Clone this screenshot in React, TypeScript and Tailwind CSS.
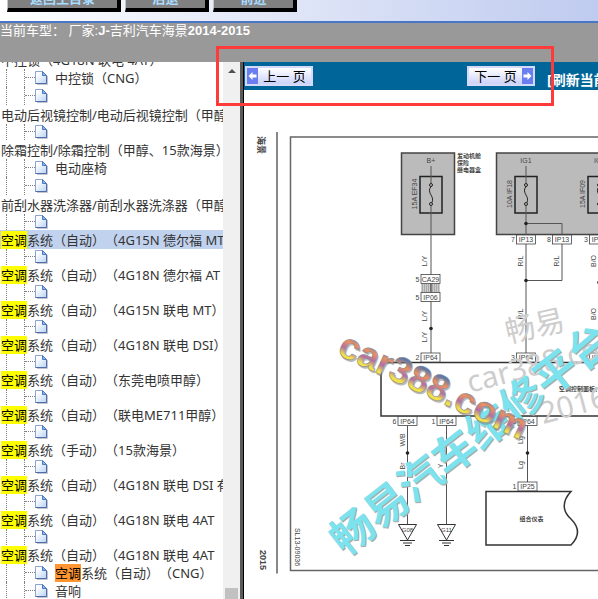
import type { ReactNode } from 'react'
import clsx from 'clsx'

type Row =
  | { kind: 'label'; text: string; hit?: boolean; selected?: boolean }
  | { kind: 'icon' }
  | { kind: 'leaf'; text?: string; hit?: boolean }

const rows: Row[] = [
  { kind: 'label', text: '中控锁（4G18N 联电 4AT）' },
  { kind: 'leaf', text: '中控锁（CNG）' },
  { kind: 'leaf' },
  { kind: 'label', text: '电动后视镜控制/电动后视镜控制（甲醇' },
  { kind: 'icon' },
  { kind: 'label', text: '除霜控制/除霜控制（甲醇、15款海景）' },
  { kind: 'leaf', text: '电动座椅' },
  { kind: 'leaf' },
  { kind: 'label', text: '前刮水器洗涤器/前刮水器洗涤器（甲醇' },
  { kind: 'icon' },
  { kind: 'label', text: '系统（自动）（4G15N 德尔福 MT', hit: true, selected: true },
  { kind: 'icon' },
  { kind: 'label', text: '系统（自动）（4G18N 德尔福 AT', hit: true },
  { kind: 'icon' },
  { kind: 'label', text: '系统（自动）（4G15N 联电 MT）', hit: true },
  { kind: 'icon' },
  { kind: 'label', text: '系统（自动）（4G18N 联电 DSI）', hit: true },
  { kind: 'icon' },
  { kind: 'label', text: '系统（自动）（东莞电喷甲醇）', hit: true },
  { kind: 'icon' },
  { kind: 'label', text: '系统（自动）（联电ME711甲醇）', hit: true },
  { kind: 'icon' },
  { kind: 'label', text: '系统（手动）（15款海景）', hit: true },
  { kind: 'icon' },
  { kind: 'label', text: '系统（自动）（4G18N 联电 DSI 有', hit: true },
  { kind: 'icon' },
  { kind: 'label', text: '系统（自动）（4G18N 联电 4AT', hit: true },
  { kind: 'icon' },
  { kind: 'label', text: '系统（自动）（4G18N 联电 4AT', hit: true },
  { kind: 'leaf', text: '系统（自动）（CNG）', hit: true },
  { kind: 'leaf', text: '音响' },
]

function DocIcon() {
  return (
    <svg width="13" height="14" viewBox="0 0 13 14" className="shrink-0">
      <defs>
        <linearGradient id="page" x1="0" y1="0" x2="1" y2="1">
          <stop offset="0.2" stopColor="#ffffff" />
          <stop offset="1" stopColor="#b9d3f5" />
        </linearGradient>
      </defs>
      <path d="M2 13.5H12.5V5" fill="none" stroke="#c2c6d2" />
      <path d="M0.5 0.5H7.5L11.5 4.5V12.5H0.5Z" fill="url(#page)" stroke="#8aa4d4" />
      <path d="M11.5 4.5V12.5H0.5" fill="none" stroke="#4f6ca8" />
      <path d="M7.5 0.5V4.5H11.5Z" fill="#8fb4ee" stroke="#4f78c0" />
    </svg>
  )
}

function TreeRow({ row }: { row: Row }) {
  if (row.kind === 'label') {
    return (
      <li className={clsx('h-[19px] pl-px leading-[20px]', row.selected && 'bg-[#c1d2ee]')}>
        <a href="#" className="block">
          {row.hit && <mark className="bg-[#ffff00] text-black">空调</mark>}
          {row.text}
        </a>
      </li>
    )
  }
  return (
    <li className={clsx('flex items-center', row.kind === 'icon' ? 'h-4' : 'h-[18px]')}>
      <span className="ml-[6px] h-full w-[18px] shrink-0 border-l border-dotted border-[#808080]" />
      <span className="h-full w-[11px] shrink-0 border-l border-dotted border-[#808080]">
        <span className="block h-1/2 border-b border-dotted border-[#808080]" />
      </span>
      <DocIcon />
      {row.kind === 'leaf' && row.text && (
        <a href="#" className="ml-[7px] leading-[18px]">
          {row.hit && <mark className="bg-[#ff9632] text-black">空调</mark>}
          {row.text}
        </a>
      )}
    </li>
  )
}

function ToolButton({ wide, children }: { wide?: boolean; children: ReactNode }) {
  return (
    <button
      className={clsx(
        '-mt-5 h-8 shrink-0 border-r-4 border-b-4 border-l border-black border-l-[#c8c8c8] bg-[#808080] pt-2 text-[13px] leading-4 font-bold text-[#a8dcff]',
        wide ? 'w-[114px]' : 'w-[84px]',
      )}
    >
      {children}
    </button>
  )
}

function Arrow({ flip }: { flip?: boolean }) {
  return (
    <svg width="11" height="16" viewBox="0 0 11 16" className="shrink-0">
      <rect width="11" height="16" fill="#6a7ef0" />
      <path
        d={flip ? 'M9.5 8L5.5 4V6.5H1.5V9.5H5.5V12Z' : 'M1.5 8L5.5 4V6.5H9.5V9.5H5.5V12Z'}
        fill="#fff"
      />
    </svg>
  )
}

/* connector plug with its pin number on the left */
function Plug({ x, y, name, pin }: { x: number; y: number; name: string; pin: string }) {
  return (
    <g>
      <rect x={x} y={y} width="19" height="9" fill="#fff" stroke="#444" strokeWidth="0.8" />
      <text x={x + 9.5} y={y + 7} textAnchor="middle">{name}</text>
      <text x={x - 3.5} y={y + 7} textAnchor="middle">{pin}</text>
    </g>
  )
}

function Fuse({ x }: { x: number }) {
  return (
    <g fill="none" stroke="#222">
      <rect x={x - 11} y="176.5" width="22" height="36.5" strokeWidth="1.5" />
      <circle cx={x} cy="185" r="1.5" />
      <circle cx={x} cy="204" r="1.5" />
      <path d={`M${x} 186.5C${x - 5} 193 ${x + 4} 196 ${x + 1} 202.5`} />
    </g>
  )
}

function Side({ x, y, children, down }: { x: number; y: number; children: string; down?: boolean }) {
  return (
    <text textAnchor="middle" transform={`translate(${x} ${y}) rotate(${down ? 90 : -90})`}>
      {children}
    </text>
  )
}

function Ground({ x, name }: { x: number; name: string }) {
  return (
    <g stroke="#333">
      <path d={`M${x - 9} 524.5H${x + 9}L${x} 540Z`} fill="#fff" />
      <path d={`M${x - 7.5} 540.5H${x + 7.5}M${x - 4.5} 543H${x + 4.5}M${x - 2.5} 545.5H${x + 2.5}`} />
      <text x={x} y="532" textAnchor="middle" stroke="none" fontSize="6">{name}</text>
    </g>
  )
}

function Diagram() {
  return (
    <svg
      width="354"
      height="509"
      viewBox="244 90 354 509"
      className="block shrink-0 overflow-visible font-['Liberation_Sans','Noto_Sans_CJK_SC',sans-serif]"
      fontSize="7"
      fill="#444"
    >
      <defs>
        <linearGradient id="rainbow" x1="0" y1="0" x2="0" y2="1">
          <stop offset="0.22" stopColor="#5f78a8" />
          <stop offset="0.4" stopColor="#f0905c" />
          <stop offset="0.58" stopColor="#b070a8" />
          <stop offset="0.74" stopColor="#f2e14a" />
        </linearGradient>
        <pattern id="hatch" width="2" height="2" patternUnits="userSpaceOnUse">
          <rect width="2" height="2" fill="#ccc" />
          <rect width="1" height="2" fill="#aaa" />
        </pattern>
      </defs>

      {/* sheet frame */}
      <path d="M277 132V573.5" stroke="#888" strokeWidth="2" />
      <path d="M700 137H290.5V570.5H700" fill="none" stroke="#666" strokeWidth="1.5" />
      <g fontWeight="bold" fontSize="9">
        <Side x={258} y={145} down>海景</Side>
        <Side x={260} y={560} down>2015</Side>
      </g>
      <Side x={295} y={547} down>SL13-09036</Side>

      {/* fuse boxes */}
      <g fill="#bbb" stroke="#444" strokeWidth="1.5">
        <rect x="401.5" y="153" width="53" height="81.5" />
        <rect x="496.5" y="153" width="160" height="81.5" />
      </g>
      <Fuse x={431} />
      <Fuse x={526} />
      <Fuse x={599} />
      <text x="431" y="163" textAnchor="middle">B+</text>
      <text x="526" y="163" textAnchor="middle">IG1</text>
      <text x="594" y="163">IG2</text>
      <Side x={417} y={194}>15A EF34</Side>
      <Side x={512} y={194}>10A IF18</Side>
      <Side x={585} y={194}>15A IF09</Side>
      <g fontSize="6" fontWeight="bold">
        <text x="457" y="158">发动机舱</text>
        <text x="457" y="165">保险</text>
        <text x="457" y="172">继电器盒</text>
      </g>

      {/* control panel and wires */}
      <rect x="381" y="362.5" width="300" height="53.5" fill="none" stroke="#333" strokeWidth="1.5" />
      <g stroke="#555" fill="none">
        <path d="M431 166V183M431 206V353M526 166V183M526 206V353M526 223.5H562V280.5H526M599 166V353" />
        <path d="M407.5 425V524M446.5 425V524M527.5 425V482" />
      </g>
      <g fill="#222">
        <circle cx="526" cy="223.5" r="1.8" />
        <circle cx="526" cy="280.5" r="1.8" />
        <circle cx="431" cy="328.5" r="1.8" />
        <circle cx="407.5" cy="453" r="1.8" />
        <circle cx="527.5" cy="453" r="1.8" />
        <circle cx="599" cy="282.5" r="1.8" />
      </g>
      <rect x="421" y="283.5" width="19" height="9" fill="url(#hatch)" />
      <path d="M431 283.5V292.5" stroke="#333" />

      <Side x={427} y={261}>L/Y</Side>
      <Side x={427} y={316}>L/Y</Side>
      <Side x={427} y={337}>L/Y</Side>
      <Side x={523} y={261}>R/L</Side>
      <Side x={559} y={261}>R/L</Side>
      <Side x={523} y={314}>R/L</Side>
      <Side x={596} y={261}>B/O</Side>
      <Side x={596} y={314}>B/O</Side>
      <Side x={405} y={440}>W/B</Side>
      <Side x={405} y={466}>Br</Side>
      <Side x={443} y={466}>Y</Side>
      <Side x={523} y={440}>Lg</Side>
      <Side x={523} y={465}>Lg</Side>

      <Plug x={516.5} y={235} name="IP13" pin="7" />
      <Plug x={552.5} y={235} name="IP13" pin="8" />
      <Plug x={589.5} y={235} name="IP13" pin="3" />
      <Plug x={421} y={274.5} name="CA29" pin="5" />
      <Plug x={421} y={292.5} name="IP06" pin="5" />
      <Plug x={421} y={353} name="IP64" pin="2" />
      <Plug x={516.5} y={353} name="IP64" pin="3" />
      <Plug x={589.5} y={353} name="IP64" pin="4" />
      <Plug x={398} y={416.5} name="IP64" pin="6" />
      <Plug x={437} y={416.5} name="IP64" pin="1" />
      <Plug x={518} y={416.5} name="IP64" pin="5" />
      <Plug x={518} y={482} name="IP25" pin="1" />
      <text x="559" y="391" fontSize="6" fontWeight="bold">空调控制面板(</text>

      <Ground x={407.5} name="G08" />
      <Ground x={446.5} name="G11" />
      <path
        d="M571 491.5H486V545H571C580 536 579 527 571 519C563 512 561 502 571 491.5Z"
        fill="#fff"
        stroke="#333"
        strokeWidth="1.5"
      />
      <text x="531.5" y="521" textAnchor="middle" fontSize="6" fontWeight="bold">组合仪表</text>

      {/* watermarks */}
      <g
        fill="#cdcdcd"
        fontSize="30"
        className="font-['Noto_Sans','Noto_Sans_CJK_SC',sans-serif]"
      >
        <text transform="translate(508 343) rotate(-13)">畅易</text>
        <text transform="translate(470 393) rotate(-15)">car388.com</text>
        <text transform="translate(543 424) rotate(-15)">2016</text>
      </g>
      <g fontSize="43" fontWeight="bold">
        <text transform="translate(346 558) rotate(-38)" fill="#b0a8a4">畅易汽车维修平台</text>
        <text transform="translate(345 557) rotate(-38)" fill="#7ce2ee">畅易汽车维修平台</text>
      </g>
      <g fontSize="37" fontWeight="bold">
        <text transform="translate(337 356) rotate(25)" fill="#777" opacity="0.5">car388.com</text>
        <text transform="translate(336 354) rotate(25)" fill="url(#rainbow)" stroke="#8d8d96" strokeWidth="0.6">
          car388.com
        </text>
      </g>
    </svg>
  )
}

export default function App() {
  return (
    <div className="relative flex h-screen flex-col overflow-hidden bg-white font-['Noto_Sans','Noto_Sans_CJK_SC',sans-serif] text-[13px] text-[#333]">
      {/* TOOLBAR */}
      <header className="flex h-[23px] shrink-0 gap-1 border-b-2 border-[#4a76c8] bg-linear-to-r from-white via-[#dfe5f7] to-[#bfcbef] pl-[7px]">
        <ToolButton wide>返回主目录</ToolButton>
        <ToolButton>后退</ToolButton>
        <ToolButton>前进</ToolButton>
      </header>

      <div className="h-[39px] shrink-0 bg-[#999] font-['Liberation_Sans','Noto_Sans_CJK_SC',sans-serif] leading-4 whitespace-nowrap text-white">
        当前车型： 厂家:<span className="font-bold">J-</span>吉利汽车海景
        <span className="font-bold">2014-2015</span>
      </div>

      <div className="flex min-h-0 flex-1">
        {/* TREE */}
        <nav className="w-[223px] shrink-0 overflow-hidden">
          <ul className="-mt-3 whitespace-nowrap [text-spacing-trim:space-all]">
            {rows.map((row, i) => (
              <TreeRow key={i} row={row} />
            ))}
          </ul>
        </nav>
        <div className="flex w-[17px] shrink-0 flex-col items-center justify-between bg-[#f0f0f0] pt-[7px]">
          <svg width="8" height="4" viewBox="0 0 8 4">
            <path d="M4 0L8 4H0Z" fill="#505050" />
          </svg>
          <span className="h-[11px] w-[13px] bg-[#c1c1c1]" />
        </div>
        <div className="w-1 shrink-0 border-r border-black bg-[#5a5a5a]" />

        {/* CONTENT */}
        <main className="min-w-0 flex-1 overflow-hidden">
          <div className="flex h-7 items-center bg-[#069] pl-px whitespace-nowrap">
            <button className="flex h-5 w-[68px] shrink-0 items-center border-2 border-[#d4daf8] bg-linear-to-b from-white to-[#ccd2fa] text-black">
              <Arrow />
              <span className="flex-1 leading-4">上一 页</span>
            </button>
            <button className="ml-[154px] flex h-5 w-[68px] shrink-0 items-center border-2 border-[#d4daf8] bg-linear-to-b from-white to-[#ccd2fa] text-black">
              <span className="flex-1 leading-4">下一 页</span>
              <Arrow flip />
            </button>
            <a href="#" className="ml-3 self-end text-sm font-bold text-white">
              [刷新当前
            </a>
          </div>
          <Diagram />
        </main>
      </div>

      {/* red marker over the page buttons */}
      <div className="pointer-events-none absolute top-[46px] left-[216px] h-[60px] w-[338px] border-3 border-[#ff3a3a]" />
    </div>
  )
}
